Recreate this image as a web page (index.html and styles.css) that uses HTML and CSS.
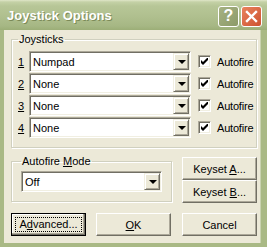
FILE: index.html
```html
<!DOCTYPE html>
<html lang="en">
<head>
  <meta charset="UTF-8">
  <title>Joystick Options</title>
  <link rel="stylesheet" href="styles.css">
</head>
<body>
<div class="window">
  <div class="titlebar">
    <span class="title">Joystick Options</span>
    <div class="caption">
      <span class="cap help">?</span>
      <span class="cap close">
        <svg width="13" height="13" viewBox="0 0 13 13"><path d="M2 2 L11 11 M11 2 L2 11" stroke="#fff" stroke-width="2.4" stroke-linecap="square"/></svg>
      </span>
    </div>
  </div>

  <div class="frame">
    <fieldset class="group joysticks">
      <legend>Joysticks</legend>

      <div class="row">
        <span class="num"><u>1</u></span>
        <div class="combo"><span class="value">Numpad</span><span class="drop"><i class="arrow"></i></span></div>
        <span class="check"><svg width="7" height="7" viewBox="0 0 7 7"><polygon points="0,2 2,4 7,-1 7,2 2,7 0,5" fill="#000"/></svg></span>
        <span class="check-label">Autofire</span>
      </div>
      <div class="row">
        <span class="num"><u>2</u></span>
        <div class="combo"><span class="value">None</span><span class="drop"><i class="arrow"></i></span></div>
        <span class="check"><svg width="7" height="7" viewBox="0 0 7 7"><polygon points="0,2 2,4 7,-1 7,2 2,7 0,5" fill="#000"/></svg></span>
        <span class="check-label">Autofire</span>
      </div>
      <div class="row">
        <span class="num"><u>3</u></span>
        <div class="combo"><span class="value">None</span><span class="drop"><i class="arrow"></i></span></div>
        <span class="check"><svg width="7" height="7" viewBox="0 0 7 7"><polygon points="0,2 2,4 7,-1 7,2 2,7 0,5" fill="#000"/></svg></span>
        <span class="check-label">Autofire</span>
      </div>
      <div class="row">
        <span class="num"><u>4</u></span>
        <div class="combo"><span class="value">None</span><span class="drop"><i class="arrow"></i></span></div>
        <span class="check"><svg width="7" height="7" viewBox="0 0 7 7"><polygon points="0,2 2,4 7,-1 7,2 2,7 0,5" fill="#000"/></svg></span>
        <span class="check-label">Autofire</span>
      </div>
    </fieldset>

    <div class="middle">
      <fieldset class="group mode">
        <legend>Autofire <u>M</u>ode</legend>
        <div class="combo mode-combo"><span class="value">Off</span><span class="drop"><i class="arrow"></i></span></div>
      </fieldset>
      <div class="keysets">
        <button class="btn">Keyset <u>A</u>...</button>
        <button class="btn">Keyset <u>B</u>...</button>
      </div>
    </div>

    <div class="actions">
      <button class="btn default"><span class="focus">A<u>d</u>vanced...</span></button>
      <button class="btn"><u>O</u>K</button>
      <button class="btn cancel">Cancel</button>
    </div>
  </div>
</div>
</body>
</html>
```

FILE: styles.css
```css
html, body {
  margin: 0;
  padding: 0;
}

body {
  font-family: "Liberation Sans", Arial, sans-serif;
  font-size: 11px;
  color: #000;
}

.window {
  width: 267px;
  height: 247px;
  display: flex;
  flex-direction: column;
  background: #a9b985;
}

.titlebar {
  height: 30px;
  flex: none;
  display: flex;
  align-items: center;
  padding: 1px 5px 0 7px;
  box-sizing: border-box;
  background: linear-gradient(#dfe6c8 0, #c4d1a6 2px, #b7c697 6px, #b0c08f 16px, #a6b784 26px, #9cae77 30px);
}

.title {
  flex: 1;
  color: #fff;
  font-size: 13px;
  font-weight: bold;
  text-shadow: 1px 1px 0 #7b8a58;
}

.caption {
  display: flex;
  gap: 2px;
  margin-top: 1px;
}

.cap {
  width: 19px;
  height: 19px;
  border: 1px solid #fff;
  border-radius: 3px;
  display: flex;
  align-items: center;
  justify-content: center;
  box-sizing: content-box;
}

.help {
  background: linear-gradient(135deg, #a6b283, #8c9a68);
  color: #fff;
  font-family: "Liberation Sans", Arial, sans-serif;
  font-weight: bold;
  font-size: 16px;
}

.close {
  background: linear-gradient(135deg, #e9835d, #cd5230);
}

.frame {
  flex: 1;
  margin: 0 7px 4px 4px;
  background: #ece9d8;
  box-shadow: 1px 0 0 #c9d3b0;
  padding: 3px 3px 0 7px;
  display: flex;
  flex-direction: column;
}

.group {
  margin: 0;
  min-inline-size: 0;
  border: 1px solid #d0d0bf;
  box-shadow: inset 1px 1px 0 #fff, 1px 1px 0 #fff;
}

.group legend {
  padding: 0 1px;
  line-height: 13px;
}

.joysticks {
  padding: 5px 0 9px 6px;
  display: flex;
  flex-direction: column;
  gap: 1px;
}

.row {
  display: flex;
  align-items: center;
  height: 21px;
}

.num {
  width: 11px;
}

.combo {
  width: 162px;
  height: 21px;
  box-sizing: border-box;
  background: #fff;
  border: 1px solid;
  border-color: #aca899 #fff #fff #aca899;
  box-shadow: inset 1px 1px 0 #716f64, inset -1px -1px 0 #f1efe2;
  display: flex;
  align-items: center;
  padding: 1px 1px 1px 3px;
}

.value {
  flex: 1;
}

.drop {
  width: 16px;
  height: 17px;
  box-sizing: border-box;
  background: #ece9d8;
  border: 1px solid;
  border-color: #f1efe2 #716f64 #716f64 #f1efe2;
  box-shadow: inset 1px 1px 0 #fff, inset -1px -1px 0 #aca899;
  display: flex;
  align-items: center;
  justify-content: center;
}

.arrow {
  width: 0;
  height: 0;
  border-left: 4px solid transparent;
  border-right: 4px solid transparent;
  border-top: 4px solid #000;
  margin: 1px 0 0 1px;
}

.check {
  width: 13px;
  height: 13px;
  box-sizing: border-box;
  margin-left: 7px;
  background: #fff;
  border: 1px solid;
  border-color: #aca899 #fff #fff #aca899;
  box-shadow: inset 1px 1px 0 #716f64, inset -1px -1px 0 #f1efe2;
  display: flex;
  align-items: center;
  justify-content: center;
}

.check-label {
  margin-left: 6px;
  letter-spacing: -0.2px;
}

.middle {
  display: flex;
  align-items: flex-start;
  margin-top: 7px;
}

.mode {
  width: 161px;
  box-sizing: border-box;
  padding: 3px 0 9px 9px;
}

.mode-combo {
  width: 141px;
}

.keysets {
  margin: 2px 0 0 auto;
  display: flex;
  flex-direction: column;
}

.btn {
  width: 75px;
  height: 23px;
  padding: 0;
  font: inherit;
  color: #000;
  background: #ece9d8;
  border: 1px solid;
  border-color: #fff #716f64 #716f64 #fff;
  box-shadow: inset -1px -1px 0 #aca899;
}

.actions {
  display: flex;
  gap: 10px;
  margin-top: 10px;
}

.cancel {
  margin-left: auto;
}

.btn.default {
  border: 1px solid #000;
  box-shadow: inset -1px -1px 0 #716f64, inset -2px -2px 0 #aca899, inset 1px 1px 0 #fff;
  padding: 3px;
  display: flex;
}

.focus {
  flex: 1;
  border: 1px dotted #000;
  line-height: 13px;
}
```
